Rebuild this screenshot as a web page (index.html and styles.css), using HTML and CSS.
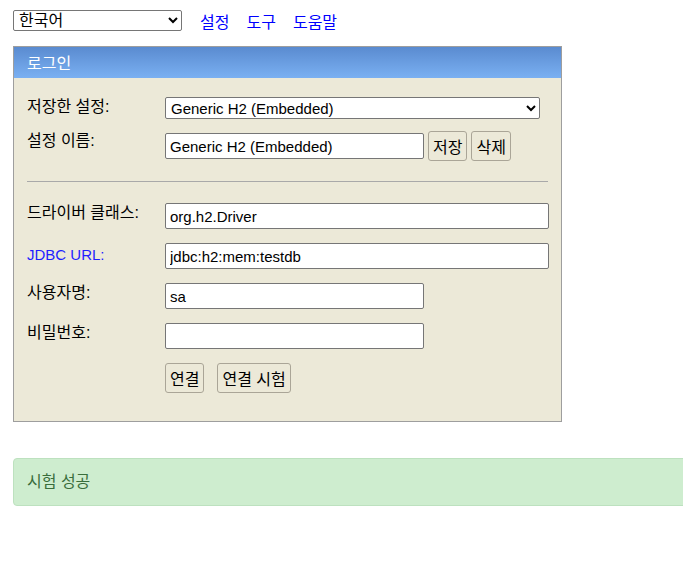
FILE: index.html
```html
<!DOCTYPE html>
<html lang="ko">
<head>
<meta charset="utf-8">
<title>H2 Console</title>
<link rel="stylesheet" href="styles.css">
</head>
<body>
<div class="page">
  <div class="topbar">
    <select class="lang-select">
      <option>한국어</option>
    </select>
    <nav class="top-links">
      <a href="#">설정</a>
      <a href="#">도구</a>
      <a href="#">도움말</a>
    </nav>
  </div>

  <div class="login">
    <div class="login-header">로그인</div>
    <div class="login-body">
      <div class="row row-first">
        <label class="label">저장한 설정:</label>
        <div class="field">
          <select class="setting-select">
            <option>Generic H2 (Embedded)</option>
          </select>
        </div>
      </div>
      <div class="row row-buttons">
        <label class="label label-btnrow">설정 이름:</label>
        <div class="field field-inline">
          <input class="text text-short" type="text" value="Generic H2 (Embedded)">
          <button class="btn">저장</button>
          <button class="btn">삭제</button>
        </div>
      </div>
      <hr class="divider">
      <div class="row">
        <label class="label">드라이버 클래스:</label>
        <div class="field"><input class="text text-long" type="text" value="org.h2.Driver"></div>
      </div>
      <div class="row">
        <label class="label label-link">JDBC URL:</label>
        <div class="field"><input class="text text-long" type="text" value="jdbc:h2:mem:testdb"></div>
      </div>
      <div class="row">
        <label class="label">사용자명:</label>
        <div class="field"><input class="text text-short" type="text" value="sa"></div>
      </div>
      <div class="row">
        <label class="label">비밀번호:</label>
        <div class="field"><input class="text text-short" type="password" value=""></div>
      </div>
      <div class="row row-actions">
        <div class="label"></div>
        <div class="field field-actions">
          <button class="btn">연결</button>
          <button class="btn">연결 시험</button>
        </div>
      </div>
    </div>
  </div>

  <div class="alert-success">시험 성공</div>
</div>
</body>
</html>
```

FILE: styles.css
```css
html, body {
  margin: 0;
  padding: 0;
  overflow: hidden;
  background: #ffffff;
}

body {
  font-family: "Liberation Sans", "Noto Sans CJK KR", sans-serif;
  font-size: 16px;
  color: #000;
}

.page {
  padding: 10px 0 0 13px;
}

.topbar {
  display: flex;
  align-items: center;
  height: 21px;
}

.lang-select {
  width: 169px;
  height: 21px;
  font-family: "Liberation Sans", "Noto Sans CJK KR", sans-serif;
  font-size: 16px;
  padding: 0 0 0 1px;
  border: 1px solid #767676;
  border-radius: 2px;
  background: #fff;
  color: #000;
}

.top-links {
  display: flex;
  gap: 17px;
  margin-left: 18px;
}

.top-links a {
  color: #0000ff;
  text-decoration: none;
  font-size: 16px;
}

.login {
  margin-top: 15px;
  width: 547px;
  border: 1px solid #9e9e9e;
  background: #ece9d8;
}

.login-header {
  box-sizing: border-box;
  height: 31px;
  padding: 2px 0 0 13px;
  line-height: 29px;
  color: #fff;
  background: linear-gradient(#5a8bd0, #7ab0f2);
}

.login-body {
  padding: 19px 13px 28px 13px;
  display: flex;
  flex-direction: column;
}

.row {
  display: flex;
  align-items: flex-start;
  margin-bottom: 14px;
}

.row-first {
  margin-bottom: 12px;
}

.row-buttons {
  margin-bottom: 0;
}

.row-actions {
  margin-bottom: 0;
}

.label {
  width: 138px;
  flex: none;
  padding-top: 1px;
  line-height: 18px;
  color: #000;
}

.label-link {
  color: #1f1fff;
  font-size: 15px;
  padding-top: 3px;
}

.field {
  flex: 1;
  display: flex;
  align-items: center;
}

.field-inline {
  gap: 4px;
  height: 30px;
}

.field-actions {
  gap: 13px;
}

.setting-select {
  width: 375px;
  height: 22px;
  font-family: "Liberation Sans", "Noto Sans CJK KR", sans-serif;
  font-size: 15px;
  padding: 0 0 0 1px;
  border: 1px solid #767676;
  border-radius: 2px;
  background: #fff;
  color: #000;
}

.text {
  box-sizing: border-box;
  height: 26px;
  padding: 0 4px;
  font-family: "Liberation Sans", "Noto Sans CJK KR", sans-serif;
  font-size: 15px;
  border: 1px solid #767676;
  border-radius: 2px;
  background: #fff;
  color: #000;
  margin: 0;
}

.text-long {
  width: 384px;
}

.text-short {
  width: 259px;
}

.btn {
  box-sizing: border-box;
  height: 30px;
  padding: 0 4px;
  margin: 0;
  font-family: "Liberation Sans", "Noto Sans CJK KR", sans-serif;
  font-size: 16px;
  color: #000;
  background: transparent;
  border: 1px solid #aaa597;
  border-radius: 3px;
}

.divider {
  margin: 20px 0 21px 0;
  border: 0;
  border-top: 1px solid #a9a9a9;
  height: 0;
}

.alert-success {
  box-sizing: border-box;
  margin-top: 36px;
  width: 700px;
  height: 48px;
  line-height: 46px;
  padding-left: 13px;
  background: #ceedcf;
  border: 1px solid #bde1bf;
  border-radius: 4px;
  color: #3a6e3c;
}
```
